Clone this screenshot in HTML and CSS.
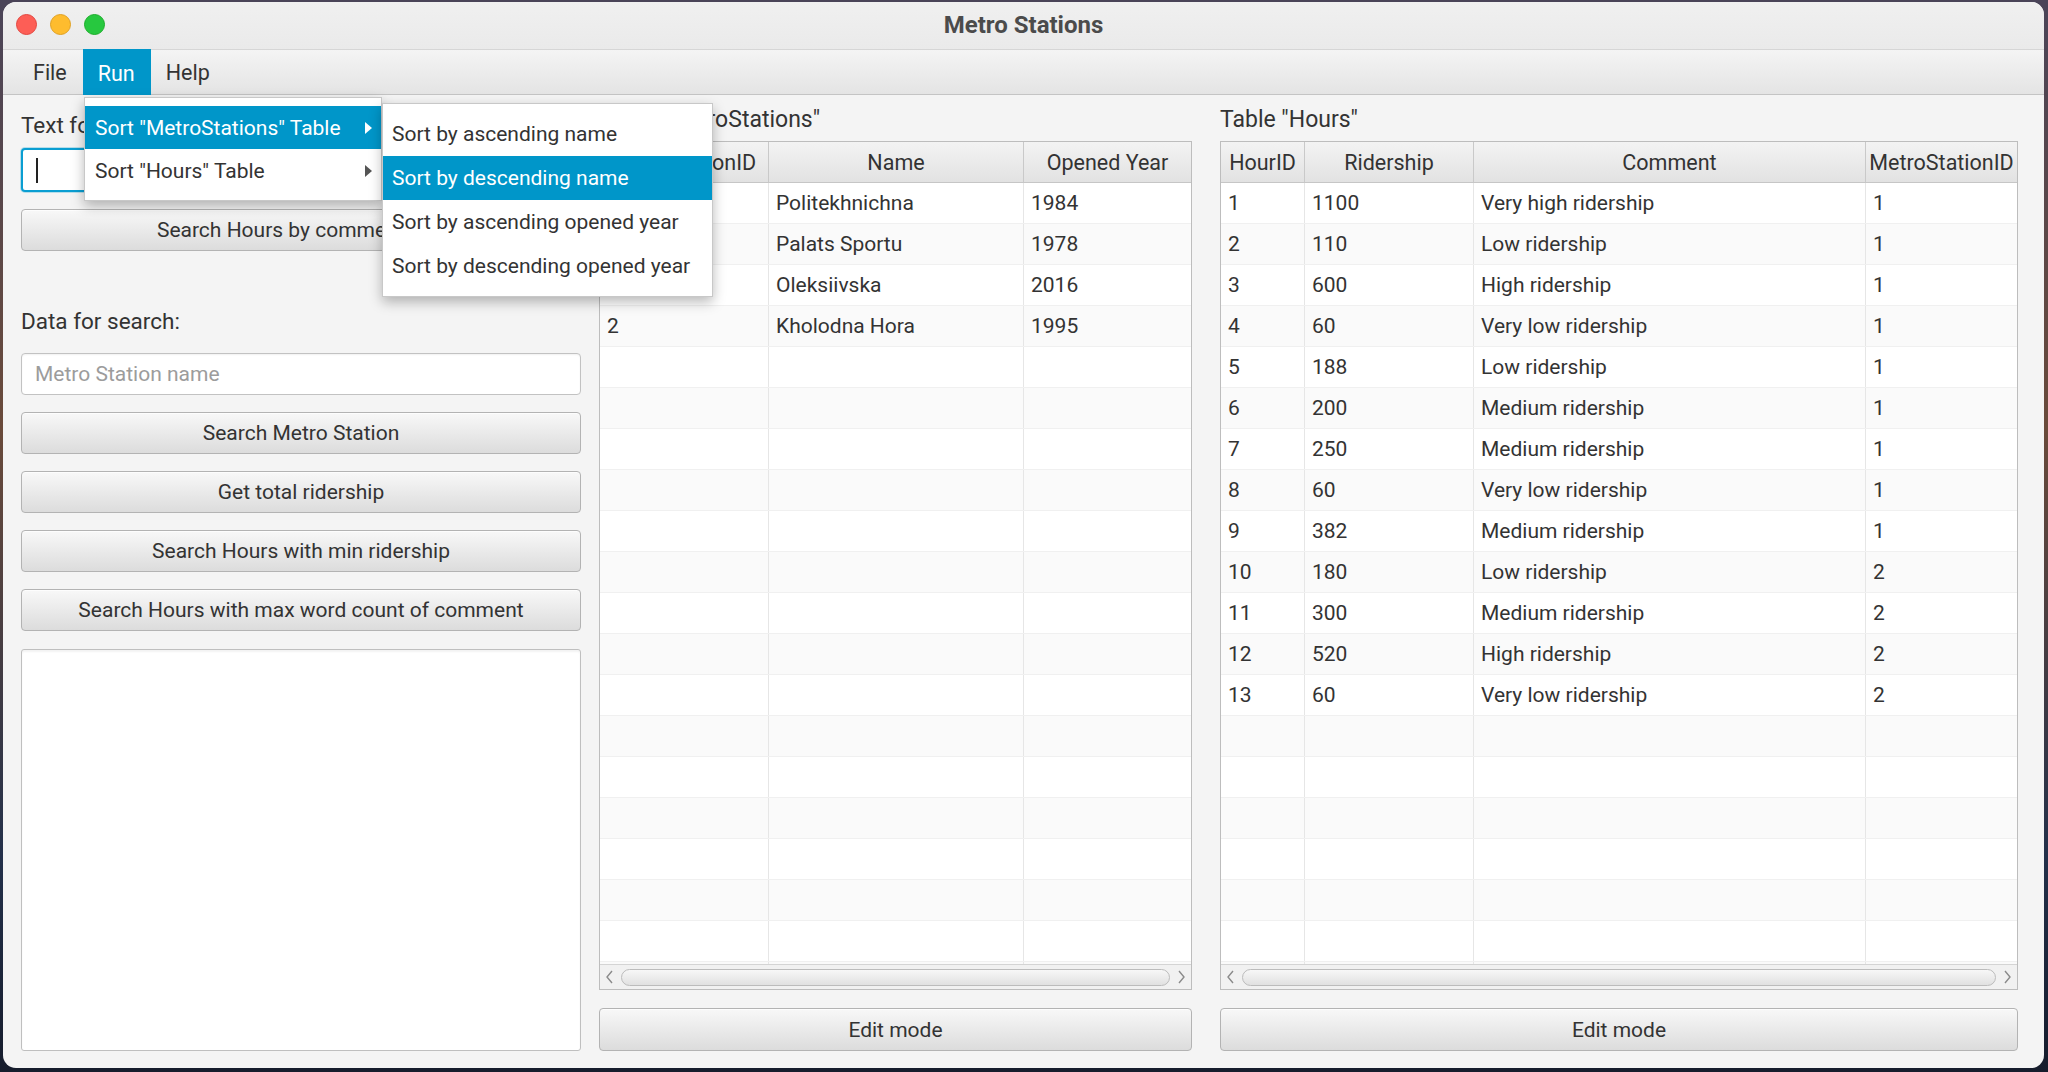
FILE: index.html
```html
<!DOCTYPE html>
<html>
<head>
<meta charset="utf-8">
<title>Metro Stations</title>
<link rel="stylesheet" href="styles.css">
</head>
<body>
<div class="desktop">
  <div class="window">
    <div class="titlebar">
      <div class="lights">
        <span class="light red"></span>
        <span class="light yellow"></span>
        <span class="light green"></span>
      </div>
      <div class="title">Metro Stations</div>
    </div>
    <div class="menubar">
      <div class="menu-item">File</div>
      <div class="menu-item active">Run</div>
      <div class="menu-item">Help</div>
    </div>
    <div class="content">
      <div class="left">
        <div class="label first">Text for search:</div>
        <div class="field focused"><span class="caret"></span></div>
        <div class="btn gap17">Search Hours by comment text</div>
        <div class="label second">Data for search:</div>
        <div class="field plain"><span class="placeholder">Metro Station name</span></div>
        <div class="btn gap17">Search Metro Station</div>
        <div class="btn gap17">Get total ridership</div>
        <div class="btn gap17">Search Hours with min ridership</div>
        <div class="btn gap17">Search Hours with max word count of comment</div>
        <div class="textarea"></div>
      </div>

      <div class="panel">
        <div class="panel-title">Table "MetroStations"</div>
        <div class="table mid-table">
          <div class="thead">
            <div class="th">MetroStationID</div>
            <div class="th">Name</div>
            <div class="th">Opened Year</div>
          </div>
          <div class="tbody">
            <div class="tr"><div class="td">1</div><div class="td">Politekhnichna</div><div class="td">1984</div></div>
            <div class="tr"><div class="td">1</div><div class="td">Palats Sportu</div><div class="td">1978</div></div>
            <div class="tr"><div class="td">2</div><div class="td">Oleksiivska</div><div class="td">2016</div></div>
            <div class="tr"><div class="td">2</div><div class="td">Kholodna Hora</div><div class="td">1995</div></div>
            <div class="tr"><div class="td"></div><div class="td"></div><div class="td"></div></div>
            <div class="tr"><div class="td"></div><div class="td"></div><div class="td"></div></div>
            <div class="tr"><div class="td"></div><div class="td"></div><div class="td"></div></div>
            <div class="tr"><div class="td"></div><div class="td"></div><div class="td"></div></div>
            <div class="tr"><div class="td"></div><div class="td"></div><div class="td"></div></div>
            <div class="tr"><div class="td"></div><div class="td"></div><div class="td"></div></div>
            <div class="tr"><div class="td"></div><div class="td"></div><div class="td"></div></div>
            <div class="tr"><div class="td"></div><div class="td"></div><div class="td"></div></div>
            <div class="tr"><div class="td"></div><div class="td"></div><div class="td"></div></div>
            <div class="tr"><div class="td"></div><div class="td"></div><div class="td"></div></div>
            <div class="tr"><div class="td"></div><div class="td"></div><div class="td"></div></div>
            <div class="tr"><div class="td"></div><div class="td"></div><div class="td"></div></div>
            <div class="tr"><div class="td"></div><div class="td"></div><div class="td"></div></div>
            <div class="tr"><div class="td"></div><div class="td"></div><div class="td"></div></div>
            <div class="tr"><div class="td"></div><div class="td"></div><div class="td"></div></div>
            <div class="tr"><div class="td"></div><div class="td"></div><div class="td"></div></div>
          </div>
          <div class="hscroll">
            <svg class="arrow" width="10" height="16" viewBox="0 0 10 16"><path d="M7 2 L2 8 L7 14" fill="none" stroke="#8a8a8a" stroke-width="1.4"/></svg>
            <div class="thumb"></div>
            <svg class="arrow" width="10" height="16" viewBox="0 0 10 16"><path d="M3 2 L8 8 L3 14" fill="none" stroke="#8a8a8a" stroke-width="1.4"/></svg>
          </div>
        </div>
        <div class="btn edit">Edit mode</div>
      </div>

      <div class="panel hours-panel">
        <div class="panel-title">Table "Hours"</div>
        <div class="table hours-table">
          <div class="thead">
            <div class="th">HourID</div>
            <div class="th">Ridership</div>
            <div class="th">Comment</div>
            <div class="th">MetroStationID</div>
          </div>
          <div class="tbody">
            <div class="tr"><div class="td">1</div><div class="td">1100</div><div class="td">Very high ridership</div><div class="td">1</div></div>
            <div class="tr"><div class="td">2</div><div class="td">110</div><div class="td">Low ridership</div><div class="td">1</div></div>
            <div class="tr"><div class="td">3</div><div class="td">600</div><div class="td">High ridership</div><div class="td">1</div></div>
            <div class="tr"><div class="td">4</div><div class="td">60</div><div class="td">Very low ridership</div><div class="td">1</div></div>
            <div class="tr"><div class="td">5</div><div class="td">188</div><div class="td">Low ridership</div><div class="td">1</div></div>
            <div class="tr"><div class="td">6</div><div class="td">200</div><div class="td">Medium ridership</div><div class="td">1</div></div>
            <div class="tr"><div class="td">7</div><div class="td">250</div><div class="td">Medium ridership</div><div class="td">1</div></div>
            <div class="tr"><div class="td">8</div><div class="td">60</div><div class="td">Very low ridership</div><div class="td">1</div></div>
            <div class="tr"><div class="td">9</div><div class="td">382</div><div class="td">Medium ridership</div><div class="td">1</div></div>
            <div class="tr"><div class="td">10</div><div class="td">180</div><div class="td">Low ridership</div><div class="td">2</div></div>
            <div class="tr"><div class="td">11</div><div class="td">300</div><div class="td">Medium ridership</div><div class="td">2</div></div>
            <div class="tr"><div class="td">12</div><div class="td">520</div><div class="td">High ridership</div><div class="td">2</div></div>
            <div class="tr"><div class="td">13</div><div class="td">60</div><div class="td">Very low ridership</div><div class="td">2</div></div>
            <div class="tr"><div class="td"></div><div class="td"></div><div class="td"></div><div class="td"></div></div>
            <div class="tr"><div class="td"></div><div class="td"></div><div class="td"></div><div class="td"></div></div>
            <div class="tr"><div class="td"></div><div class="td"></div><div class="td"></div><div class="td"></div></div>
            <div class="tr"><div class="td"></div><div class="td"></div><div class="td"></div><div class="td"></div></div>
            <div class="tr"><div class="td"></div><div class="td"></div><div class="td"></div><div class="td"></div></div>
            <div class="tr"><div class="td"></div><div class="td"></div><div class="td"></div><div class="td"></div></div>
            <div class="tr"><div class="td"></div><div class="td"></div><div class="td"></div><div class="td"></div></div>
          </div>
          <div class="hscroll">
            <svg class="arrow" width="10" height="16" viewBox="0 0 10 16"><path d="M7 2 L2 8 L7 14" fill="none" stroke="#8a8a8a" stroke-width="1.4"/></svg>
            <div class="thumb"></div>
            <svg class="arrow" width="10" height="16" viewBox="0 0 10 16"><path d="M3 2 L8 8 L3 14" fill="none" stroke="#8a8a8a" stroke-width="1.4"/></svg>
          </div>
        </div>
        <div class="btn edit">Edit mode</div>
      </div>
    </div>

    <div class="dropdown">
      <div class="dd-item active">Sort "MetroStations" Table<span class="tri"></span></div>
      <div class="dd-item">Sort "Hours" Table<span class="tri"></span></div>
    </div>
    <div class="submenu">
      <div class="dd-item">Sort by ascending name</div>
      <div class="dd-item active">Sort by descending name</div>
      <div class="dd-item">Sort by ascending opened year</div>
      <div class="dd-item">Sort by descending opened year</div>
    </div>
  </div>
</div>
</body>
</html>
```

FILE: styles.css
```css
* { box-sizing: border-box; }
html, body {
  margin: 0;
  padding: 0;
  width: 2048px;
  height: 1072px;
  overflow: hidden;
}
body {
  font-family: Roboto, "Liberation Sans", "Noto Sans", sans-serif;
  font-size: 21px;
  color: #333333;
}
.desktop {
  width: 2048px;
  height: 1072px;
  padding: 2px 4px 4px 3px;
  background: linear-gradient(180deg, #4a4458 0%, #6a4a3a 40%, #23304a 80%, #161c2c 100%);
}
.window {
  position: relative;
  width: 2041px;
  height: 1066px;
  border-radius: 13px;
  overflow: hidden;
  background: #f4f4f4;
  display: flex;
  flex-direction: column;
}
.titlebar {
  height: 47px;
  flex: none;
  background: linear-gradient(#f0f0f0, #eaeaea);
  display: flex;
  align-items: center;
  justify-content: center;
  position: relative;
}
.lights {
  position: absolute;
  left: 13px;
  top: 12px;
  display: flex;
  gap: 13px;
}
.light {
  width: 21px;
  height: 21px;
  border-radius: 50%;
  display: block;
}
.red { background: #fd5e56; border: 1px solid #e2463f; }
.yellow { background: #febc2e; border: 1px solid #dfa023; }
.green { background: #27c83f; border: 1px solid #1dad2b; }
.title {
  font-weight: bold;
  font-size: 24px;
  color: #4b4b4b;
  margin-top: -2px;
}
.menubar {
  height: 46px;
  flex: none;
  display: flex;
  padding-left: 15px;
  border-top: 1px solid #d6d6d6;
  border-bottom: 1px solid #c4c4c4;
  background: linear-gradient(#f4f4f4, #e4e4e4);
}
.menu-item {
  padding: 0 16px 0 15px;
  display: flex;
  align-items: center;
  height: 45px;
  margin-top: -1px;
  padding-top: 2px;
  color: #333;
  font-size: 21.5px;
}
.menu-item.active {
  background: #0096c9;
  color: #ffffff;
  height: 46px;
}
.content {
  flex: 1;
  display: grid;
  grid-template-columns: 560px 593px 1fr;
  column-gap: 18px;
  padding: 0 26px 17px 18px;
  min-height: 0;
}
.hours-panel { padding-left: 10px; }
.left {
  display: flex;
  flex-direction: column;
  min-height: 0;
}
.label {
  line-height: 24px;
  height: 24px;
  color: #333;
  font-size: 22.5px;
  white-space: nowrap;
}
.label.first { margin-top: 18px; }
.label.second { margin-top: 58px; }
.field {
  background: #ffffff;
  border: 1px solid #c2c2c2;
  border-radius: 4px;
  display: flex;
  align-items: center;
  padding-left: 13px;
}
.field.focused {
  margin-top: 11px;
  height: 44px;
  border: 2px solid #0a9ed2;
  box-shadow: 0 0 0 1px rgba(0,150,201,0.25);
}
.caret {
  display: block;
  width: 2px;
  height: 25px;
  background: #222;
}
.field.plain {
  margin-top: 20px;
  height: 42px;
  box-shadow: inset 0 1px 2px rgba(0,0,0,0.06);
}
.placeholder { color: #9c9c9c; }
.btn {
  height: 42px;
  flex: none;
  display: flex;
  align-items: center;
  justify-content: center;
  border: 1px solid #b3b3b3;
  border-radius: 4px;
  background: linear-gradient(#f8f8f8, #dcdcdc);
  box-shadow: inset 0 1px 0 rgba(255,255,255,0.7);
  color: #333;
  white-space: nowrap;
  overflow: hidden;
}
.gap17 { margin-top: 17px; }
.textarea {
  flex: 1;
  margin-top: 18px;
  background: #ffffff;
  border: 1px solid #bfbfbf;
  border-radius: 3px;
  box-shadow: inset 0 2px 2px rgba(0,0,0,0.05);
}
.panel {
  display: flex;
  flex-direction: column;
  min-height: 0;
}
.panel-title {
  margin-top: 13px;
  line-height: 24px;
  height: 24px;
  color: #333;
  font-size: 23px;
  white-space: nowrap;
}
.table {
  margin-top: 9px;
  flex: 1;
  min-height: 0;
  display: flex;
  flex-direction: column;
  border: 1px solid #bdbdbd;
  background: #ffffff;
  overflow: hidden;
}
.thead, .tr {
  display: grid;
  flex: none;
}
.mid-table .thead, .mid-table .tr { grid-template-columns: 169px 255px 1fr; }
.hours-table .thead, .hours-table .tr { grid-template-columns: 84px 169px 392px 1fr; }
.thead {
  height: 41px;
  background: linear-gradient(#f3f3f3, #e2e2e2);
  border-bottom: 1px solid #c6c6c6;
}
.th {
  display: flex;
  align-items: center;
  justify-content: center;
  border-right: 1px solid #c9c9c9;
  color: #333;
  white-space: nowrap;
  overflow: hidden;
  font-size: 21.5px;
}
.th:last-child { border-right: none; }
.tbody {
  flex: 1;
  min-height: 0;
  overflow: hidden;
}
.tr {
  height: 41px;
  border-bottom: 1px solid #f0f0f0;
  background: #ffffff;
}
.tr:nth-child(even) { background: #fafafa; }
.td {
  display: flex;
  align-items: center;
  padding-left: 7px;
  border-right: 1px solid #e6e6e6;
  white-space: nowrap;
  overflow: hidden;
}
.td:last-child { border-right: none; }
.hscroll {
  height: 25px;
  flex: none;
  display: flex;
  align-items: center;
  gap: 6px;
  padding: 0 5px;
  border-top: 1px solid #d4d4d4;
  background: #f1f1f1;
}
.arrow { flex: none; display: block; }
.thumb {
  flex: 1;
  height: 17px;
  border: 1px solid #bcbcbc;
  border-radius: 9px;
  background: linear-gradient(#f7f7f7, #e1e1e1);
}
.btn.edit {
  margin-top: 18px;
  height: 43px;
}
.dropdown {
  position: absolute;
  left: 81px;
  top: 95px;
  width: 298px;
  padding: 8px 0;
  background: #ffffff;
  border: 1px solid #c8c8c8;
  box-shadow: 0 5px 12px rgba(0,0,0,0.28);
  z-index: 5;
}
.submenu {
  position: absolute;
  left: 379px;
  top: 101px;
  width: 331px;
  padding: 8px 0;
  background: #ffffff;
  border: 1px solid #c8c8c8;
  box-shadow: 0 5px 12px rgba(0,0,0,0.28);
  z-index: 6;
}
.dd-item {
  height: 43px;
  display: flex;
  align-items: center;
  padding-left: 10px;
  position: relative;
  color: #333;
  white-space: nowrap;
}
.submenu .dd-item { height: 44px; padding-left: 9px; }
.dd-item.active {
  background: #0096c9;
  color: #ffffff;
}
.tri {
  position: absolute;
  right: 9px;
  top: 50%;
  margin-top: -6px;
  width: 0;
  height: 0;
  border-top: 6px solid transparent;
  border-bottom: 6px solid transparent;
  border-left: 7px solid #555;
}
.dd-item.active .tri { border-left-color: #ffffff; }
```
